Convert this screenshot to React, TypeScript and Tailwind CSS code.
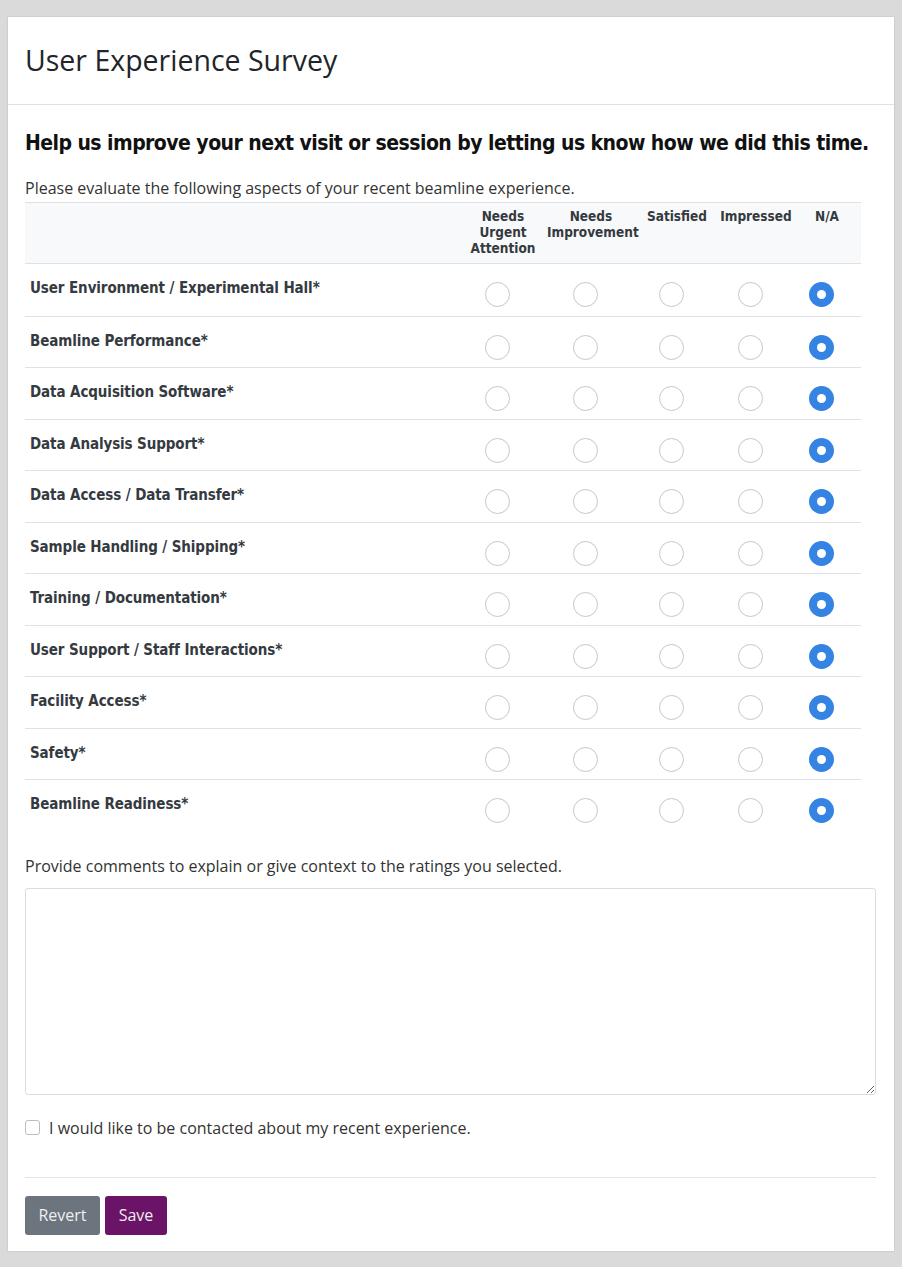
import React from "react";

const rows = [
  "User Environment / Experimental Hall*",
  "Beamline Performance*",
  "Data Acquisition Software*",
  "Data Analysis Support*",
  "Data Access / Data Transfer*",
  "Sample Handling / Shipping*",
  "Training / Documentation*",
  "User Support / Staff Interactions*",
  "Facility Access*",
  "Safety*",
  "Beamline Readiness*",
];

function Radio({ checked }: { checked?: boolean }) {
  return (
    <div className="flex justify-center pr-3 pt-[18px]">
      {checked ? (
        <div className="w-[25px] h-[25px] rounded-full bg-[#3584e4] flex items-center justify-center">
          <div className="w-[9px] h-[9px] rounded-full bg-white" />
        </div>
      ) : (
        <div className="w-[25px] h-[25px] rounded-full border-[1.5px] border-[#cbc6c1] bg-white" />
      )}
    </div>
  );
}

export default function App() {
  return (
    <div className="min-h-[1267px] bg-[#dadada] pt-[17px] px-[8px] pb-[16px] [font-family:'Open_Sans',sans-serif]">
      <div className="bg-white shadow-[0_0_2px_rgba(0,0,0,0.15)]">
        <div className="h-[88px] border-b border-[#dee2e6] flex items-center px-[17px]">
          <h1 className="text-[28.5px] leading-[34px] text-[#212529] -mt-[1px]">User Experience Survey</h1>
        </div>
        <div className="pl-[17px] pr-[18px] pb-[16px]">
          <h2 className="mt-[23px] text-[21px] leading-[30px] tracking-[-0.55px] whitespace-nowrap font-bold text-[#111] [font-family:'DejaVu_Sans_Condensed','Liberation_Sans_Narrow',sans-serif] [font-stretch:condensed]">
            Help us improve your next visit or session by letting us know how we did this time.
          </h2>
          <p className="mt-[19px] text-[16px] leading-[22px] text-[#333]">
            Please evaluate the following aspects of your recent beamline experience.
          </p>
          <div className="mt-[3px] w-[836px] [font-family:'DejaVu_Sans_Condensed','Liberation_Sans_Narrow',sans-serif] [font-stretch:condensed]">
            <div className="grid grid-cols-[434px_88px_88px_84px_74px_68px] bg-[#f8f9fa] border-t border-b border-[#dee2e6] h-[62px] pt-[5px] text-[13.5px] leading-[16px] font-bold text-[#343a40] text-center">
              <div />
              <div>Needs<br />Urgent<br />Attention</div>
              <div>Needs<br />Improvement</div>
              <div>Satisfied</div>
              <div>Impressed</div>
              <div>N/A</div>
            </div>
            {rows.map((r, i) => (
              <div
                key={r}
                className={
                  "grid grid-cols-[434px_88px_88px_84px_74px_68px] h-[51.5px] items-start " +
                  (i > 0 ? "border-t border-[#dee2e6]" : "")
                }
              >
                <div className="pl-[5px] pt-[14px] text-[15px] leading-[20px] tracking-[-0.1px] font-bold text-[#343a40]">{r}</div>
                <Radio />
                <Radio />
                <Radio />
                <Radio />
                <Radio checked />
              </div>
            ))}
          </div>
          <p className="mt-[24px] text-[16px] leading-[22px] text-[#333]">
            Provide comments to explain or give context to the ratings you selected.
          </p>
          <textarea className="mt-[11px] block w-full h-[207px] border border-[#dcdcdc] rounded-[3px] outline-none" />
          <div className="mt-[22px] flex items-center h-[22px]">
            <div className="w-[15px] h-[15px] border border-[#b8bec6] rounded-[3px] bg-white" />
            <span className="ml-[9px] text-[16px] text-[#333]">I would like to be contacted about my recent experience.</span>
          </div>
          <div className="mt-[38px] border-t border-[#e3e3e3]" />
          <div className="mt-[18px] flex gap-[5px]">
            <button className="h-[39px] w-[75px] rounded-[3px] bg-[#6c757d] text-[#eef0f2] text-[16px]">Revert</button>
            <button className="h-[39px] w-[62px] rounded-[3px] bg-[#6b1467] text-[#eee] text-[16px]">Save</button>
          </div>
        </div>
      </div>
    </div>
  );
}
